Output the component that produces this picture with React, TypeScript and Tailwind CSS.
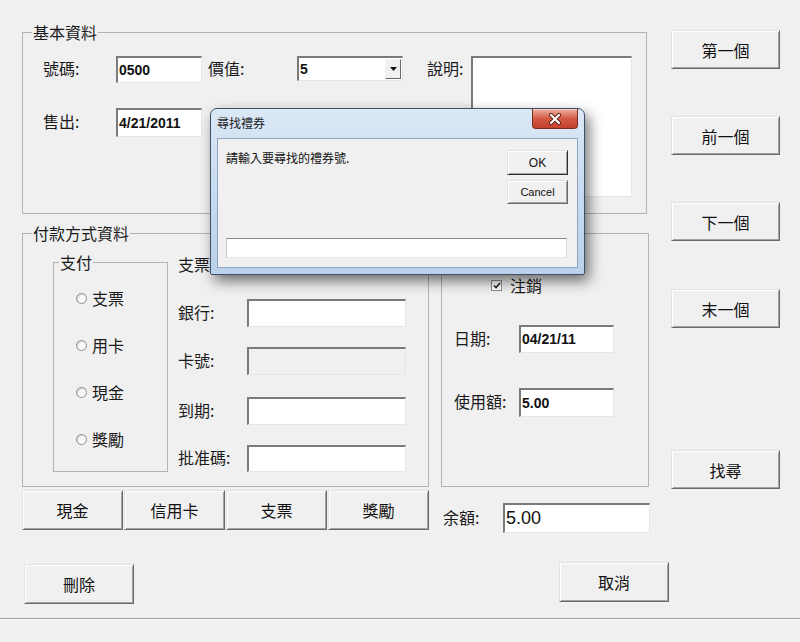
import type { ReactNode } from 'react';

const cjk = "font-['Noto_Sans_CJK_TC','Noto_Sans',sans-serif]";
const latin = "font-['Liberation_Sans','Arial',sans-serif]";

type Box = { className?: string; children?: ReactNode };

const Btn = ({ className = '', size = 'text-[16px] leading-[18px]', edge = 'border-r-[#6a6a6a] border-b-[#6a6a6a]', children }: Box & { size?: string; edge?: string }) => (
  <button
    type="button"
    className={`flex items-center justify-center bg-[#f0f0f0] border border-t-[#e2e2e2] border-l-[#e2e2e2] ${edge} shadow-[inset_1px_1px_0_#ffffff,inset_-1px_-1px_0_#a3a3a3] text-[#111] ${size} ${className}`}
  >
    {children}
  </button>
);

const Label = ({ className = '', children }: Box) => (
  <div className={`flex items-center pb-[3px] text-[16px] leading-[18px] text-[#1a1a1a] ${className}`}>{children}</div>
);

const Field = ({
  value = '',
  className = '',
  text = `${latin} font-bold text-[14px]`,
  disabled = false,
}: {
  value?: string;
  className?: string;
  text?: string;
  disabled?: boolean;
}) => (
  <div
    className={`flex items-center pl-[1px] border-t-2 border-l-2 border-t-[#7a7a7a] border-l-[#7a7a7a] border-b border-r border-b-[#e6e6e6] border-r-[#e6e6e6] ${
      disabled ? 'bg-[#f0f0f0]' : 'bg-white'
    } ${className}`}
  >
    <span className={`${text} text-[#111]`}>{value}</span>
  </div>
);

const Group = ({
  title,
  className = '',
  legend = 'ml-[9px]',
  children,
}: Box & { title: string; legend?: string }) => (
  <fieldset className={`border border-[#b2b2b2] ${className}`}>
    <legend className={`px-[1px] text-[16px] leading-[18px] text-[#1a1a1a] ${legend}`}>{title}</legend>
    {children}
  </fieldset>
);

const Radio = ({ label }: { label: string }) => (
  <div className="flex items-center h-[20px]">
    <span className="w-[11px] h-[11px] rounded-full border border-[#8e8e8e] bg-[#fafafa] shadow-[inset_1px_1px_1px_#d0d0d0]" />
    <span className="ml-[5px] text-[16px] leading-[18px] text-[#1a1a1a]">{label}</span>
  </div>
);

const Row = ({ label, className = '', h = 'h-[28px]', disabled = false }: { label: string; className?: string; h?: string; disabled?: boolean }) => (
  <div className={`flex ${h} ${className}`}>
    <Label className="w-[69px]">{label}</Label>
    <Field className={`w-[159px] ${h}`} disabled={disabled} />
  </div>
);

export default function App() {
  return (
    <div className={`relative w-[800px] h-[642px] overflow-hidden bg-[#f0f0f0] text-[#111] ${cjk}`}>
      <div className="flex h-[533px] pl-[22px]">
        <div className="w-[628px]">
          <Group title="基本資料" className="mt-[23px] w-[625px] h-[191px]">
            <div className="flex pt-[15px] pl-[20px]">
              <div>
                <div className="flex h-[27px]">
                  <Label className="w-[73px]">號碼:</Label>
                  <Field value="0500" className="w-[86px] h-[27px]" />
                  <Label className="ml-[6px] w-[89px]">價值:</Label>
                  <div className="flex items-center w-[106px] h-[25px] pl-[1px] pr-[1px] bg-white border-t-2 border-l-2 border-t-[#7a7a7a] border-l-[#7a7a7a] border-b border-r border-b-[#e6e6e6] border-r-[#e6e6e6]">
                    <span className={`${latin} font-bold text-[14px] text-[#111]`}>5</span>
                    <span className="ml-auto flex items-center justify-center w-[16px] h-[20px] bg-[#f0f0f0] border border-t-[#f4f4f4] border-l-[#f4f4f4] border-r-[#6a6a6a] border-b-[#6a6a6a]">
                      <svg width="7" height="4" viewBox="0 0 7 4">
                        <path d="M0 0h7L3.5 4z" fill="#111" />
                      </svg>
                    </span>
                  </div>
                </div>
                <div className="flex h-[29px] mt-[25px]">
                  <Label className="w-[73px]">售出:</Label>
                  <Field value="4/21/2011" className="w-[86px] h-[29px]" />
                </div>
              </div>
              <Label className="ml-[24px] w-[44px] h-[27px]">說明:</Label>
              <div className="w-[161px] h-[141px] bg-white border-t-2 border-l-2 border-t-[#7a7a7a] border-l-[#7a7a7a] border-b border-r border-b-[#e6e6e6] border-r-[#e6e6e6]" />
            </div>
          </Group>

          <div className="flex mt-[10px]">
            <Group title="付款方式資料" className="w-[407px] h-[263px]">
              <div className="flex">
                <Group title="支付" legend="ml-[5px]" className="ml-[30px] mt-[11px] w-[115px] h-[219px]">
                  <div className="flex flex-col gap-[27px] pt-[17px] pl-[22px]">
                    {['支票', '用卡', '現金', '獎勵'].map((t) => (
                      <Radio key={t} label={t} />
                    ))}
                  </div>
                </Group>
                <div className="ml-[10px] w-[228px]">
                  <div className="mt-[13px] h-[18px] text-[16px] leading-[18px] text-[#1a1a1a]">支票資料</div>
                  <Row label="銀行:" className="mt-[26px]" />
                  <Row label="卡號:" className="mt-[20px]" disabled />
                  <Row label="到期:" className="mt-[22px]" />
                  <Row label="批准碼:" className="mt-[20px]" h="h-[27px]" />
                </div>
              </div>
            </Group>

            <Group title="狀態" className="ml-[12px] w-[208px] h-[263px]">
              <div className="flex items-center h-[18px] mt-[34px] pl-[49px]">
                <span className="flex items-center justify-center w-[11px] h-[11px] bg-white border border-[#8e8e8e]">
                  <svg width="8" height="7" viewBox="0 0 8 7">
                    <path d="M1 3.5l2 2L7 1" stroke="#222" strokeWidth="1.6" fill="none" />
                  </svg>
                </span>
                <span className="ml-[8px] text-[16px] leading-[18px] text-[#1a1a1a]">注銷</span>
              </div>
              <div className="flex h-[28px] mt-[31px] pl-[12px]">
                <Label className="w-[65px]">日期:</Label>
                <Field value="04/21/11" className="w-[95px] h-[28px]" />
              </div>
              <div className="flex h-[29px] mt-[35px] pl-[12px]">
                <Label className="w-[65px]">使用額:</Label>
                <Field value="5.00" className="w-[95px] h-[29px]" />
              </div>
            </Group>
          </div>

          <div className="flex mt-[3px]">
            <div className="flex gap-[1px]">
              {['現金', '信用卡', '支票', '獎勵'].map((t) => (
                <Btn key={t} className="w-[101px] h-[40px]">
                  {t}
                </Btn>
              ))}
            </div>
            <div className="flex h-[30px] mt-[13px] ml-[14px]">
              <Label className="w-[60px]">余額:</Label>
              <Field value="5.00" className="w-[147px] h-[30px]" text={`${latin} text-[18px]`} />
            </div>
          </div>
        </div>

        <div className="flex flex-col ml-[21px] w-[109px] pt-[30px]">
          <Btn className="h-[39px]">第一個</Btn>
          <Btn className="h-[39px] mt-[47px]">前一個</Btn>
          <Btn className="h-[39px] mt-[47px]">下一個</Btn>
          <Btn className="h-[39px] mt-[48px]">末一個</Btn>
          <Btn className="h-[39px] mt-[122px]">找尋</Btn>
        </div>
      </div>

      <div className="flex items-start mt-[29px] pl-[24px]">
        <Btn className="mt-[2px] w-[110px] h-[40px]">刪除</Btn>
        <Btn className="ml-[425px] w-[110px] h-[40px]">取消</Btn>
      </div>
      <div className="mt-[14px] h-[2px] border-t border-t-[#a0a0a0] border-b border-b-white" />

      {/* input box dialog */}
      <div className="absolute left-[210px] top-[108px] flex flex-col w-[375px] h-[167px] rounded-t-[7px] rounded-b-[2px] border border-[#3f5064] bg-gradient-to-b from-[#dbe8f6] via-[#c8dbf0] to-[#b9d1ea] shadow-[4px_6px_14px_rgba(0,0,0,0.55)]">
        <div className="flex h-[29px]">
          <span className="pl-[6px] pt-[7px] text-[12px] leading-[14px] text-[#1b1b1b]">尋找禮券</span>
          <span className="ml-auto mr-[6px] flex items-center justify-center w-[46px] h-[20px] rounded-b-[4px] border border-t-0 border-[#7a2c21] bg-gradient-to-b from-[#eab1a4] via-[#d45a44] to-[#c2402c] shadow-[inset_0_1px_0_rgba(255,255,255,0.4)]">
            <svg width="14" height="12" viewBox="0 0 14 12">
              <path d="M3 2l8 8M11 2l-8 8" stroke="#5b1e16" strokeWidth="4" strokeLinecap="round" />
              <path d="M3 2l8 8M11 2l-8 8" stroke="#ffffff" strokeWidth="2.2" strokeLinecap="round" />
            </svg>
          </span>
        </div>
        <div className="mx-[6px] h-[130px] bg-[#f0f0f0] border border-[#8fa5bf]">
          <div className="flex justify-between">
            <span className="pl-[8px] pt-[11px] text-[12px] leading-[16px] text-[#111]">請輸入要尋找的禮券號.</span>
            <div className="flex flex-col pt-[11px] pr-[9px]">
              <Btn
                className={`w-[61px] h-[25px] ${latin}`}
                size="text-[12px] leading-[14px]"
                edge="border-r-[#2e2e2e] border-b-[#2e2e2e]"
              >
                OK
              </Btn>
              <Btn className={`mt-[5px] w-[61px] h-[24px] ${latin}`} size="text-[11px] leading-[14px]">
                Cancel
              </Btn>
            </div>
          </div>
          <div className="mt-[34px] ml-[8px] w-[341px] h-[20px] bg-white border border-t-[#8a8a8a] border-l-[#c4c4c4] border-r-[#dcdcdc] border-b-[#e8e8e8]" />
        </div>
      </div>
    </div>
  );
}
